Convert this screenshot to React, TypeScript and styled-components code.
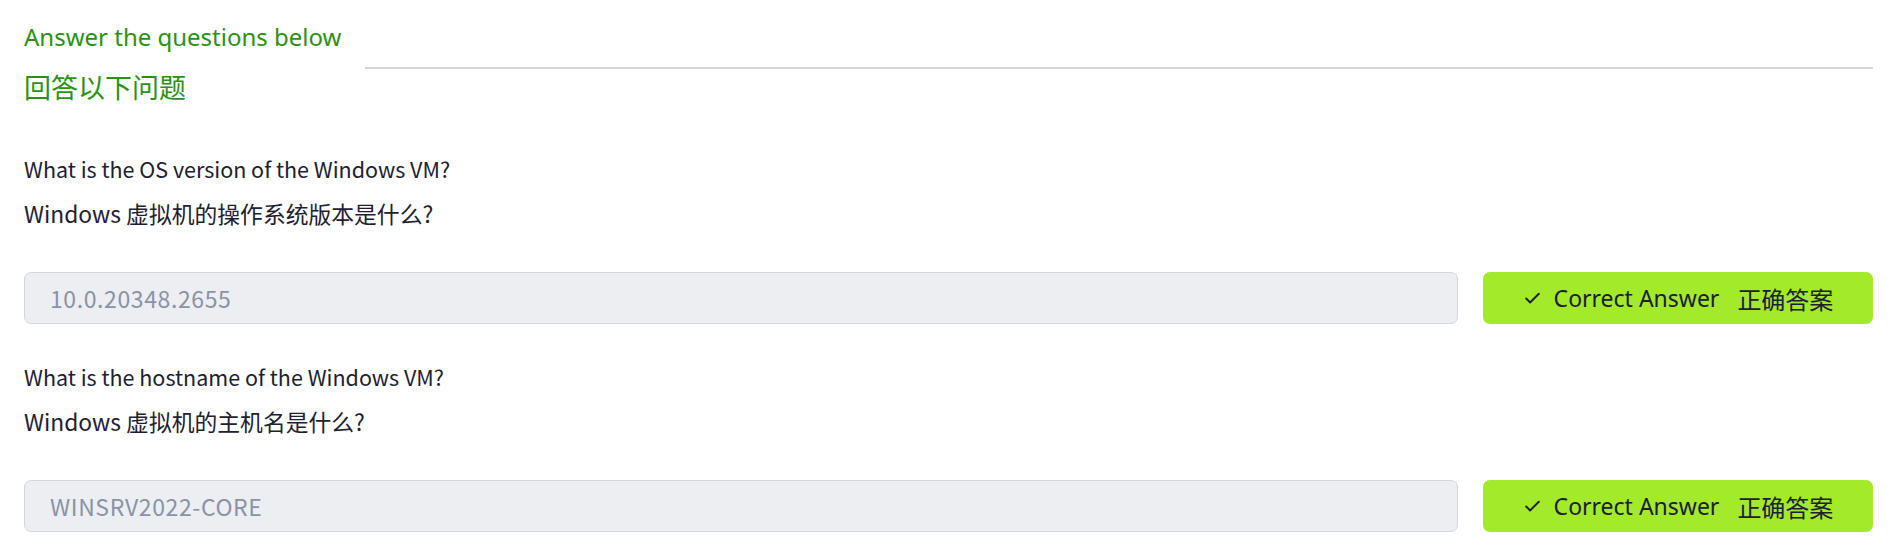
import React from "react";
import styled, { createGlobalStyle } from "styled-components";
import { Check } from "lucide-react";

const GlobalStyle = createGlobalStyle`
  body {
    margin: 0;
    background: #ffffff;
    font-family: "Noto Sans CJK SC", "Noto Sans", sans-serif;
  }
`;

const questions = [
  {
    id: 1,
    en: "What is the OS version of the Windows VM?",
    cn: "Windows 虚拟机的操作系统版本是什么?",
    answer: "10.0.20348.2655",
  },
  {
    id: 2,
    en: "What is the hostname of the Windows VM?",
    cn: "Windows 虚拟机的主机名是什么?",
    answer: "WINSRV2022-CORE",
  },
];

const App = () => {
  return (
    <Page>
      <GlobalStyle />
      <Header>
        <TitleBlock>
          <Title>Answer the questions below</Title>
          <TitleCn>回答以下问题</TitleCn>
        </TitleBlock>
        <Rule />
      </Header>
      <List>
        {questions.map((q) => (
          <Question key={q.id}>
            <Prompt>{q.en}</Prompt>
            <PromptCn>{q.cn}</PromptCn>
            <AnswerRow>
              <AnswerInput value={q.answer} readOnly />
              <CorrectButton>
                <Check size={19} strokeWidth={2.4} />
                <span>Correct Answer</span>
                <CnLabel>正确答案</CnLabel>
              </CorrectButton>
            </AnswerRow>
          </Question>
        ))}
      </List>
    </Page>
  );
};

const Page = styled.main`
  padding: 19px 20px 0 24px;
`;

const Header = styled.div`
  display: flex;
  align-items: flex-start;
`;

const TitleBlock = styled.div`
  display: flex;
  flex-direction: column;
  gap: 14px;
  color: #2b9213;
`;

const Title = styled.div`
  font-family: "Noto Sans", sans-serif;
  font-size: 24px;
  line-height: 36px;
`;

const TitleCn = styled.div`
  font-size: 27px;
  line-height: 36px;
`;

const Rule = styled.div`
  flex: 1;
  height: 2px;
  margin: 48px 0 0 24px;
  background: #d4d7de;
`;

const List = styled.div`
  display: flex;
  flex-direction: column;
  gap: 36px;
  margin-top: 47px;
`;

const Question = styled.section`
  display: flex;
  flex-direction: column;
`;

const Prompt = styled.div`
  font-size: 21.5px;
  line-height: 34px;
  color: #1d2130;
`;

const PromptCn = styled(Prompt)`
  margin-top: 11px;
  font-size: 22.8px;
`;

const AnswerRow = styled.div`
  display: flex;
  gap: 25px;
  margin-top: 41px;
  height: 52px;
`;

const AnswerInput = styled.input`
  flex: 1;
  box-sizing: border-box;
  height: 52px;
  padding: 0 25px;
  border: 1px solid #d3d6dc;
  border-radius: 7px;
  background: #eceef2;
  font-family: "Noto Sans CJK SC", sans-serif;
  font-size: 23px;
  letter-spacing: 0.6px;
  color: #8a93a5;
  outline: none;
`;

const CorrectButton = styled.button`
  width: 390px;
  height: 52px;
  display: flex;
  align-items: center;
  justify-content: center;
  gap: 12px;
  border: none;
  border-radius: 7px;
  background: #a3ea2a;
  color: #1c2033;
  font-family: "Noto Sans", sans-serif;
  font-size: 23px;
  cursor: pointer;
  svg {
    margin-top: 1px;
  }
`;

const CnLabel = styled.span`
  margin-left: 6px;
  font-family: "Noto Sans CJK SC", sans-serif;
  font-size: 24px;
`;

export default App;
